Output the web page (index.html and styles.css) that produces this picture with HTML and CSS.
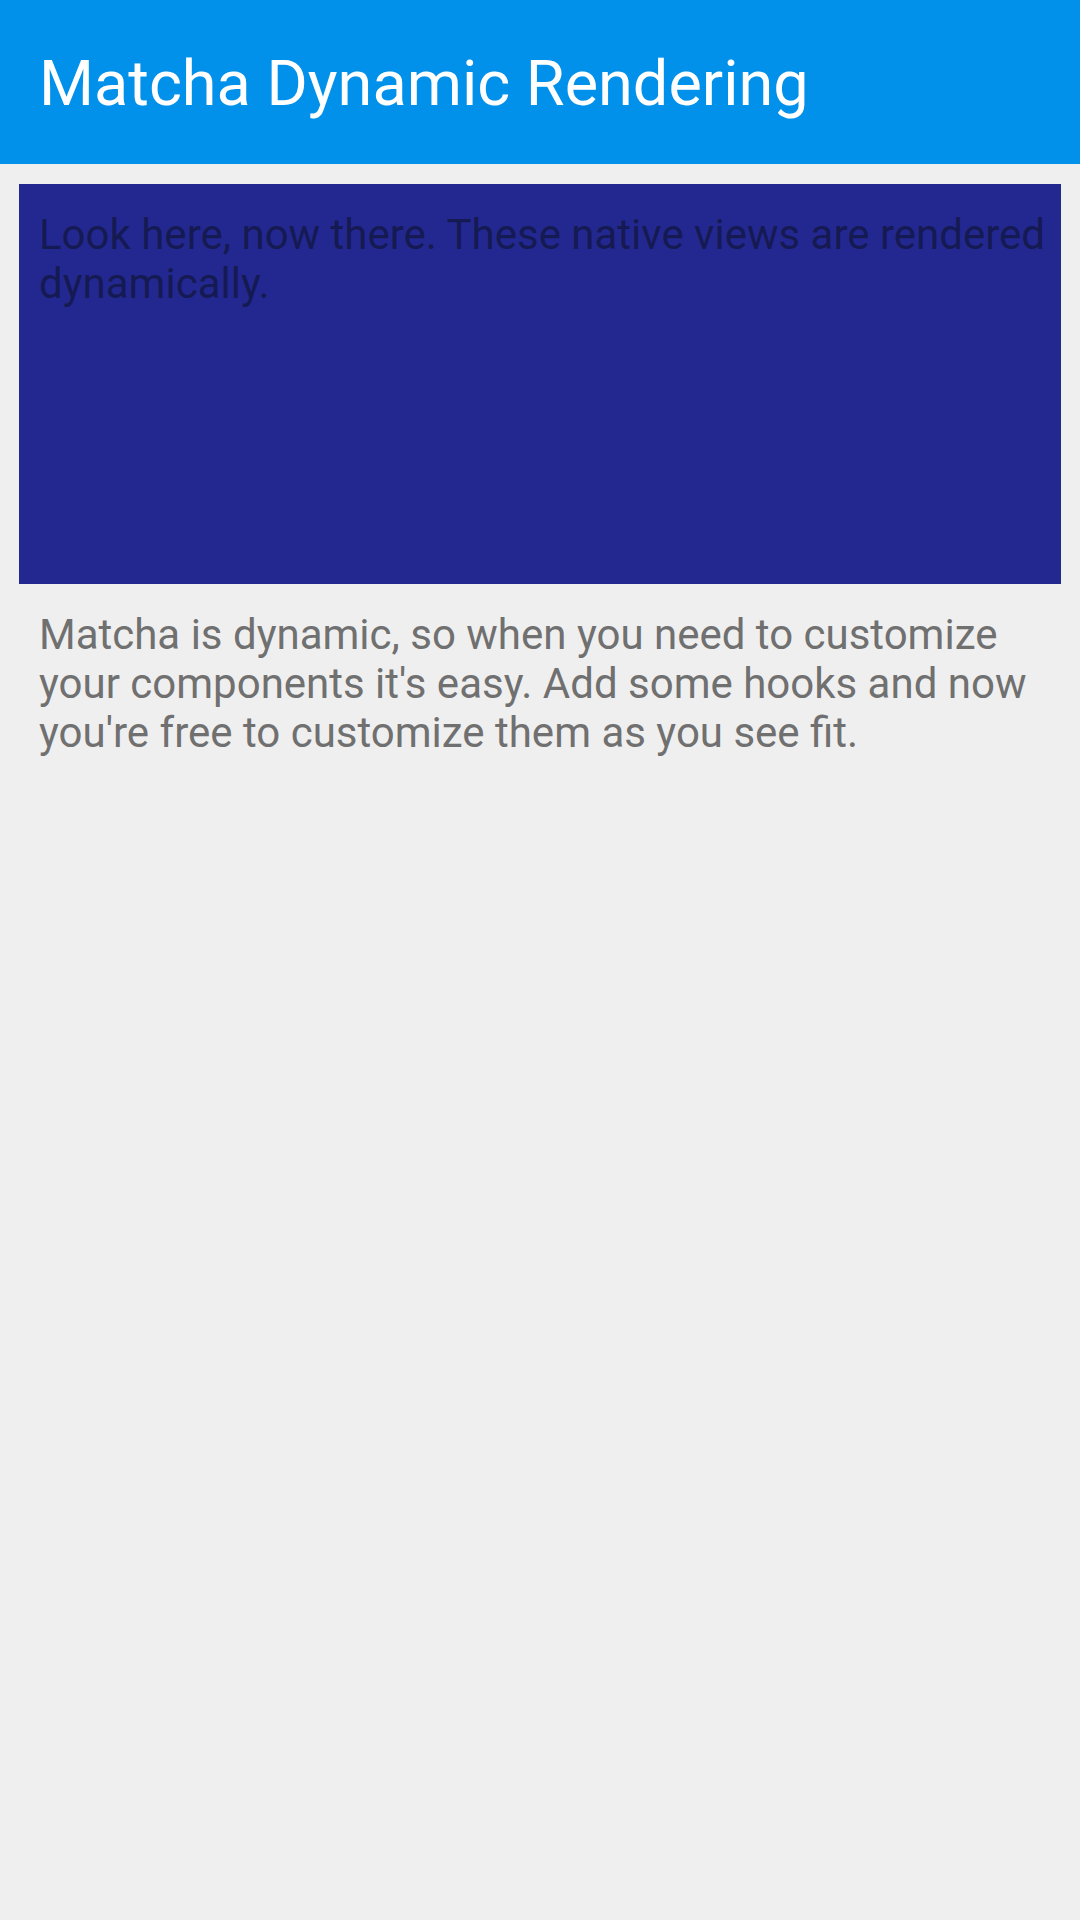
FILE: index.html
```html
<!DOCTYPE html>
<html>
<head>
<meta charset="utf-8">
<link rel="stylesheet" href="styles.css">
</head>
<body>
<header class="appbar"><h1 class="title">Matcha Dynamic Rendering</h1></header>
<main class="content">
  <div class="card"><p class="card-text">Look here, now there. These native views are rendered dynamically.</p></div>
  <p class="body-text">Matcha is dynamic, so when you need to customize your components it's easy. Add some hooks and now you're free to customize them as you see fit.</p>
</main>
</body>
</html>
```
FILE: styles.css
```css
html, body { margin: 0; padding: 0; }
body {
  width: 1080px;
  height: 1920px;
  background: #efefef;
  font-family: Roboto, "Noto Sans", sans-serif;
  overflow: hidden;
}
.appbar {
  height: 164px;
  background: #0291ea;
  padding: 52px 39px 0 39px;
  box-sizing: border-box;
}
.title {
  margin: 0;
  font-weight: 400;
  font-size: 63px;
  color: #ffffff;
  line-height: 63px;
}
.content {
  padding: 20px 19px 0 19px;
}
.card {
  background: #232891;
  height: 400px;
  box-sizing: border-box;
  padding: 26px 10px 0 20px;
}
.card-text {
  margin: 0;
  font-size: 42px;
  line-height: 49px;
  color: #161a52;
}
.body-text {
  margin: 26px 10px 0 20px;
  font-size: 42px;
  line-height: 49px;
  color: #707070;
}
```
